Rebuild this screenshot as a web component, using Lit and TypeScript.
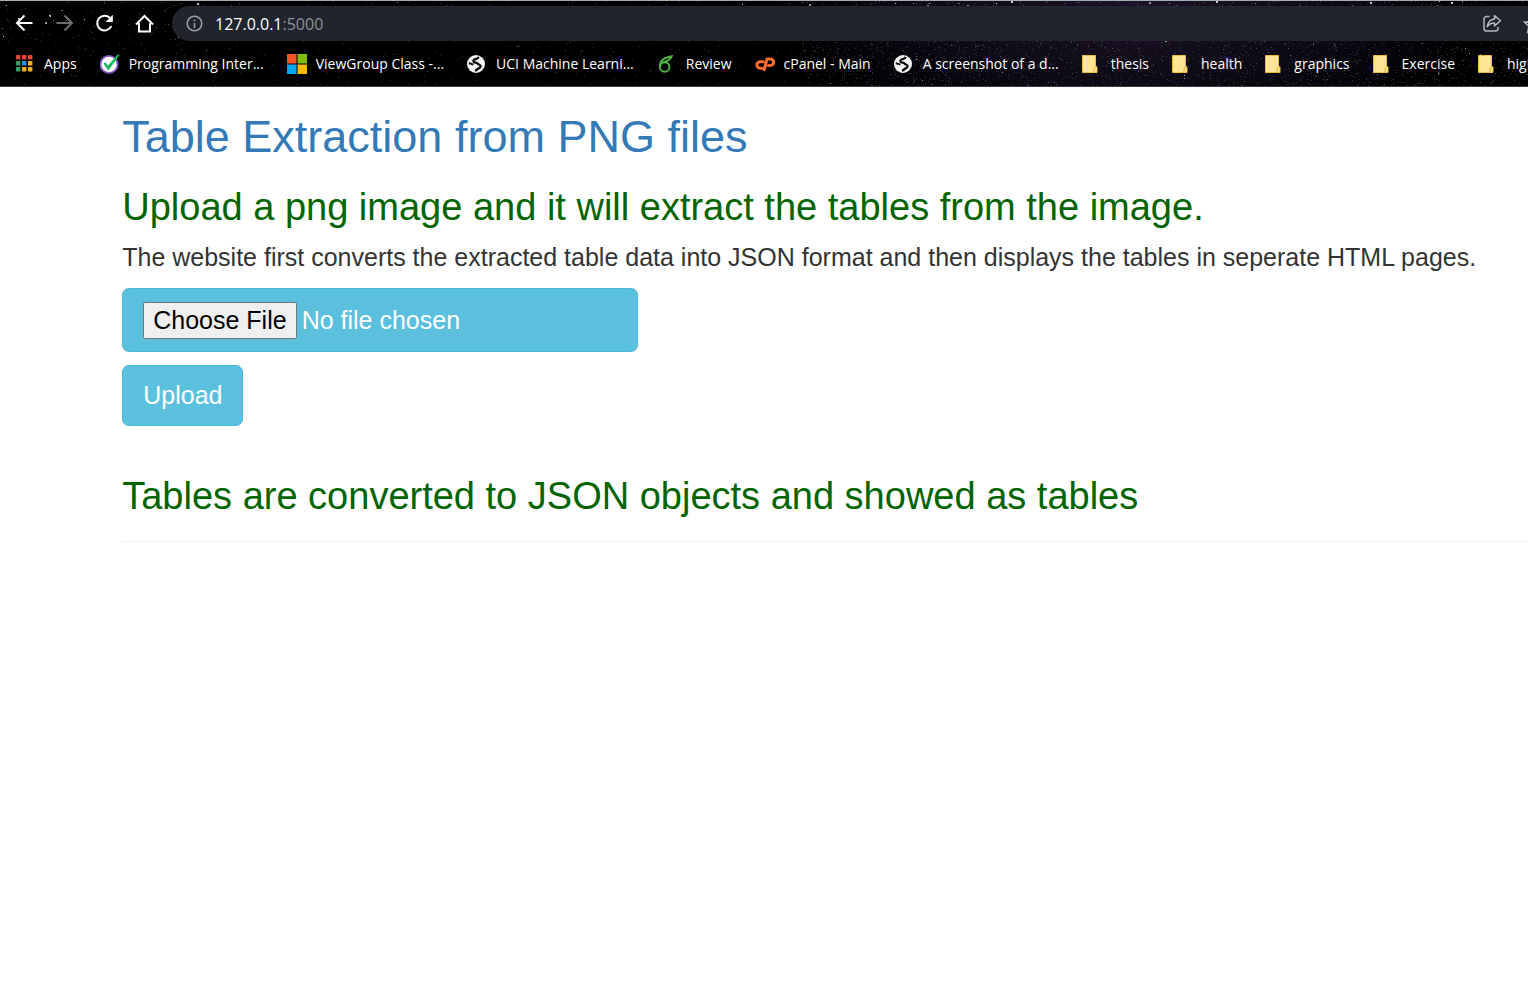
import { LitElement, html, css, svg, TemplateResult } from "lit";
import { customElement, state } from "lit/decorators.js";

type IconName = "apps" | "tick" | "windows" | "globe" | "leaf" | "cpanel" | "folder";

const bookmarks: { icon: IconName; label: string }[] = [
  { icon: "apps", label: "Apps" },
  { icon: "tick", label: "Programming Inter..." },
  { icon: "windows", label: "ViewGroup Class -..." },
  { icon: "globe", label: "UCI Machine Learni..." },
  { icon: "leaf", label: "Review" },
  { icon: "cpanel", label: "cPanel - Main" },
  { icon: "globe", label: "A screenshot of a d..." },
  { icon: "folder", label: "thesis" },
  { icon: "folder", label: "health" },
  { icon: "folder", label: "graphics" },
  { icon: "folder", label: "Exercise" },
  { icon: "folder", label: "high" },
];

const appColors = ["#f04438", "#f04438", "#f04438", "#34a060", "#2f8ff5", "#f8b312", "#34a060", "#f8b312", "#f8b312"];

const icons: Record<IconName, TemplateResult> = {
  apps: html`<svg class="icon" viewBox="0 0 20 20">
    ${appColors.map((c, i) => svg`<rect x=${1 + (i % 3) * 6} y=${1 + Math.floor(i / 3) * 6} width="4.4" height="4.4" rx=".6" fill=${c} />`)}
  </svg>`,
  tick: html`<svg class="icon" viewBox="0 0 20 20">
    <circle cx="9" cy="10.4" r="8.6" fill="#fff" stroke="#8457c6" stroke-width="1.8" />
    <path d="M3.400 9.600 5.400 8.200 8 11.600 17.500.4l2.300.3L8.300 16.400z" fill="#19b85c" />
  </svg>`,
  windows: html`<svg class="icon" viewBox="0 0 20 20">
    <path fill="#f35325" d="M0 0h9.500v9.500H0z" /><path fill="#81bc06" d="M10.500 0H20v9.500h-9.500z" />
    <path fill="#05a6f0" d="M0 10.500h9.500V20H0z" /><path fill="#ffba08" d="M10.500 10.500H20V20h-9.500z" />
  </svg>`,
  globe: html`<svg class="icon" viewBox="0 0 20 20">
    <circle cx="9" cy="10" r="9" fill="#f4f4f4" />
    <path d="M11.800 2.800C10.800 5.200 8.600 4.800 7.200 5.600 5.600 6.600 6.200 8.600 8.400 8.700c2.600.1 2.400 1.700 4 2.100 1.800.5 1.500 2.600-.3 3.300-1.500.6-1.900 2.100-4.100 2.500" fill="none" stroke="#0a0a0a" stroke-width="2.200" />
    <path d="M1.800 9.200c2 0 2.800 1.100 4.600 1.300" fill="none" stroke="#0a0a0a" stroke-width="2" />
  </svg>`,
  leaf: html`<svg class="icon" viewBox="0 0 20 20" fill="none" stroke="#4cb840" stroke-width="1.900">
    <circle cx="7.700" cy="13" r="4.800" />
    <path d="M3 13c-.4-4 1.400-7 5-8.800 2.200-1.100 4.200-1.500 6.800-2C13.500 5.600 11 7.300 5.800 8.200" />
  </svg>`,
  cpanel: html`<svg class="icon" viewBox="0 0 20 20" fill="none" stroke="#ff6c2c" stroke-width="3" stroke-linejoin="round" stroke-linecap="round">
    <path d="M8.200 7.800H5.200a3.200 3.200 0 0 0-.2 6.400h1.800M9.300 15.600l2.700-10.600h3.400a3.100 3.100 0 0 1 0 6.500h-1.900" />
  </svg>`,
  folder: html`<svg class="icon" viewBox="0 0 20 20">
    <path d="M.5 1.500h13v11.300h1.500v5.700H.5z" fill="#ffe595" stroke="#e9bd45" />
    <path d="M12 18.500v-4.200l1.500-1.500" fill="none" stroke="#e0ad2b" />
  </svg>`,
};

/** Deterministic star field: bright specks up high, faint dust elsewhere, denser toward the nebula. */
function stars(): TemplateResult[] {
  let seed = 20231;
  const rnd = () => (seed = (seed * 16807) % 2147483647) / 2147483647;
  const tints = ["#e4e6ec", "#a9abb5", "#6c6a78", "#403e4c"];
  const paths = ["", "", "", ""];
  for (let i = 0; i < 7000; i++) {
    const x = Math.floor(rnd() * 1900);
    const y = Math.floor(rnd() * 86);
    const high = y < 40;
    if (x < 800 && rnd() > (high ? 0.3 : 0.15)) continue;
    const r = rnd();
    const t = high ? (r < 0.05 ? 0 : r < 0.15 ? 1 : r < 0.45 ? 2 : 3) : r < 0.01 ? 1 : r < 0.15 ? 2 : 3;
    const s = t < 2 && high && rnd() < 0.4 ? 2 : 1;
    paths[t] += `M${x} ${y}h${s}v${s}h-${s}z`;
  }
  return paths.map((d, i) => svg`<path d=${d} fill=${tints[i]} opacity=${i > 1 ? 0.7 : 0.85} />`) as unknown as TemplateResult[];
}

@customElement("browser-bar")
export class BrowserBar extends LitElement {
  static styles = css`
    :host {
      display: block;
      font-family: "Open Sans", "Noto Sans", sans-serif;
      color: #fff;
    }
    .bar {
      position: relative;
      overflow: hidden;
      background: radial-gradient(ellipse 360px 150px at 74% 0, #1d1328, #08070f 70%, #000);
      border-top: 1px solid #a9adb0;
      border-bottom: 1px solid #3b3c40;
      padding-top: 5px;
    }
    .sky {
      position: absolute;
      inset: 0;
      width: 1900px;
      height: 100%;
    }
    .row {
      position: relative;
      display: flex;
      align-items: center;
    }
    .nav {
      display: flex;
      flex: none;
      gap: 16px;
      padding: 0 16px 0 12px;
    }
    .tool {
      display: block;
      width: 24px;
      height: 24px;
      padding: 0;
      border: 0;
      background: none;
      color: #fff;
    }
    .tool.dim {
      color: #6e6e70;
    }
    .tool.soft {
      color: #b5b7bb;
      flex: none;
    }
    .tool svg {
      display: block;
      width: 24px;
      height: 24px;
    }
    .address {
      flex: 1;
      display: flex;
      align-items: center;
      min-width: 0;
      height: 35px;
      padding-left: 10px;
      border-radius: 18px 0 0 18px;
      background: #20242d;
      overflow: hidden;
    }
    .tool.info {
      color: #9a9da3;
    }
    .url {
      position: relative;
      flex: 1;
      display: flex;
      min-width: 0;
      padding-left: 9px;
      font: 16px/24px "Open Sans", sans-serif;
    }
    .field {
      width: 100%;
      border: 0;
      padding: 0;
      background: none;
      color: transparent;
      font: inherit;
    }
    .shown {
      position: absolute;
      pointer-events: none;
      white-space: nowrap;
    }
    .port {
      color: #8f9297;
    }
    .ends {
      display: flex;
      flex: none;
      gap: 16px;
      margin-right: -16px;
    }
    .marks {
      gap: 23px;
      height: 45px;
      padding-left: 15px;
    }
    .mark {
      display: flex;
      flex: none;
      align-items: center;
      gap: 9px;
      color: #fff;
      font-size: 14px;
      line-height: 20px;
      white-space: nowrap;
      text-decoration: none;
    }
    .icon {
      display: block;
      width: 20px;
      height: 20px;
    }
  `;

  render() {
    return html`
      <header class="bar">
        <svg class="sky" aria-hidden="true">${stars()}</svg>
        <div class="row">
          <nav class="nav">
            <button class="tool" aria-label="Back">
              <svg viewBox="0 0 24 24" fill="none" stroke="currentColor" stroke-width="2"><path d="M20.500 11H5.500M12.500 3.500 5 11l7.500 7.500" /></svg>
            </button>
            <button class="tool dim" aria-label="Forward">
              <svg viewBox="0 0 24 24" fill="none" stroke="currentColor" stroke-width="2"><path d="M4.500 11h15M12.500 3.500 20 11l-7.500 7.500" /></svg>
            </button>
            <button class="tool" aria-label="Reload">
              <svg viewBox="0 0 24 24" fill="none" stroke="currentColor" stroke-width="2"><path d="M19.300 14.200A7.400 7.400 0 1 1 17.800 5.800" /><path d="M20.800 2.800v7.200h-7.200z" fill="currentColor" stroke="none" /></svg>
            </button>
            <button class="tool" aria-label="Home">
              <svg viewBox="0 0 24 24" fill="none" stroke="currentColor" stroke-width="2"><path d="M4 12.500 12.500 4l8.500 8.500M7 11v8.500h11V11" /></svg>
            </button>
          </nav>
          <div class="address">
            <svg class="tool info" viewBox="0 0 24 24" fill="none" stroke="currentColor" stroke-width="1.600"><circle cx="12.500" cy="11.500" r="7.300" /><path d="M12.500 11v5M12.500 7.500v1.800" /></svg>
            <div class="url">
              <span class="shown" aria-hidden="true">127.0.0.1<span class="port">:5000</span></span>
              <input class="field" aria-label="Address" />
            </div>
            <div class="ends">
              <button class="tool soft" aria-label="Share">
                <svg viewBox="0 0 24 24" fill="none" stroke="currentColor" stroke-width="1.500" stroke-linejoin="round"><path d="M9.500 4.500h-3A2.500 2.500 0 0 0 4 7v9.500A2.500 2.500 0 0 0 6.500 19h9a2.500 2.500 0 0 0 2.500-2.500v-1.500" /><path d="M14.500 3.500 20.500 8.700l-6 5.200v-3c-3.200 0-5.300.8-7.300 3.800.6-4.200 2.800-7.300 7.300-7.800z" /></svg>
              </button>
              <button class="tool soft" aria-label="Bookmark this page">
                <svg viewBox="0 0 24 24" fill="none" stroke="currentColor" stroke-width="1.600"><path d="m13 4 2.500 5.600 6 .6-4.500 4 1.300 6-5.300-3.200L7.700 20.200 9 14.200l-4.500-4 6-.6z" /></svg>
              </button>
            </div>
          </div>
        </div>
        <nav class="row marks">
          ${bookmarks.map((b) => html`<a class="mark" href="#">${icons[b.icon]}<span>${b.label}</span></a>`)}
        </nav>
      </header>
    `;
  }
}

@customElement("app-root")
export class AppRoot extends LitElement {
  @state() private busy = false;

  static styles = css`
    :host {
      display: block;
      min-height: 100vh;
      overflow: hidden;
      background: #fff;
      color: #333;
      font-family: "Liberation Sans", Arial, sans-serif;
      font-size: 25px;
      line-height: 35px;
    }
    .page {
      padding: 25px 0 25px 8%;
    }
    .title,
    .lead {
      margin: 0;
      font-weight: 500;
    }
    .title {
      color: #337ab7;
      font-size: 45px;
      line-height: 50px;
    }
    .lead {
      color: #006400;
      font-size: 38px;
      line-height: 42px;
    }
    .title + .lead {
      margin-top: 24px;
    }
    .text {
      margin: 12px 0 13px;
    }
    .form {
      display: flex;
      flex-direction: column;
      align-items: flex-start;
      gap: 13px;
      margin-bottom: 49px;
    }
    .button {
      box-sizing: border-box;
      border: 1px solid #46b8da;
      border-radius: 7px;
      padding: 12px 20px;
      background: #5bc0de;
      color: #fff;
      font: inherit;
    }
    .file {
      width: 516px;
      max-width: 100%;
      padding: 13px 20px 12px;
      line-height: 33px;
    }
    .file::file-selector-button {
      box-sizing: border-box;
      margin: 0 5px 0 0;
      border: 1px solid #767676;
      border-radius: 2px;
      padding: 1px 9px;
      background: #efefef;
      color: #000;
      font: inherit;
    }
    .rule {
      margin: 24px 0;
      border: 0;
      border-top: 1px solid #eee;
    }
  `;

  private submit(e: Event) {
    e.preventDefault();
    this.busy = true;
  }

  render() {
    return html`
      <browser-bar></browser-bar>
      <main class="page">
        <h1 class="title">Table Extraction from PNG files</h1>
        <h2 class="lead">Upload a png image and it will extract the tables from the image.</h2>
        <p class="text">The website first converts the extracted table data into JSON format and then displays the tables in seperate HTML pages.</p>
        <form class="form" @submit=${this.submit}>
          <input class="button file" type="file" accept="image/png" aria-label="PNG file" />
          <button class="button" type="submit" ?disabled=${this.busy}>Upload</button>
        </form>
        <h2 class="lead">Tables are converted to JSON objects and showed as tables</h2>
        <hr class="rule" />
      </main>
    `;
  }
}
